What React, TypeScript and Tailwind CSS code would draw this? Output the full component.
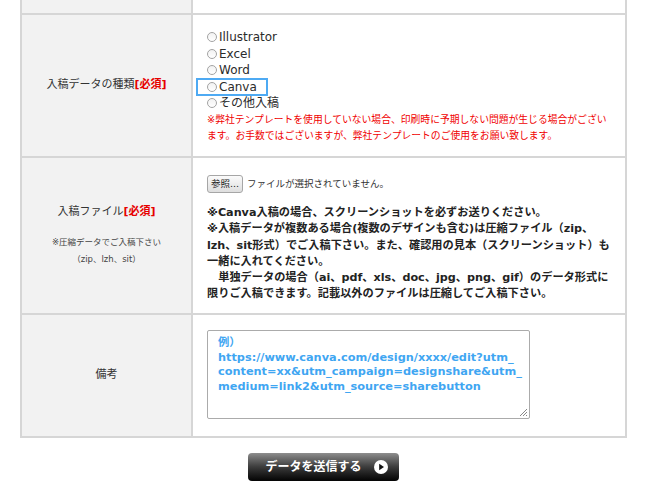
const jp = "font-['DejaVu_Sans','Noto_Sans_CJK_JP',sans-serif]"

function Radio({ label, boxed }: { label: string; boxed?: boolean }) {
  return (
    <div className="relative flex items-center h-[16.5px]">
      {boxed && (
        <span className="absolute left-[-11px] top-[-1px] w-[72px] h-[18px] border-2 border-[#4eaaf3]" />
      )}
      <span className="w-[10px] h-[10px] rounded-full border border-[#a3a3a3] bg-gradient-to-b from-[#f2f2f2] to-white mr-[2px]" />
      <span className="text-[12px] text-[#2b2b2b] leading-none">{label}</span>
    </div>
  )
}

function Required() {
  return <span className="text-[#e60000] font-bold">[必須]</span>
}

export default function App() {
  return (
    <div className={`w-[660px] h-[495px] bg-white overflow-hidden ${jp}`}>
      <div className="ml-[20px] w-[607px] border-x-2 border-[#d6d6d6]">
        {/* 前の行（上端で切れている） */}
        <div className="flex h-[15px] border-b-2 border-[#d6d6d6]">
          <div className="w-[171px] bg-[#f2f2f2] border-r-2 border-[#d6d6d6]" />
          <div className="flex-1" />
        </div>

        {/* 入稿データの種類 */}
        <div className="flex h-[143px] border-b-2 border-[#d6d6d6]">
          <div className="w-[171px] bg-[#f2f2f2] border-r-2 border-[#d6d6d6] flex items-center justify-center text-[11px] text-[#333]">
            入稿データの種類<Required />
          </div>
          <div className="flex-1 pl-[14px] pt-[14px]">
            <Radio label="Illustrator" />
            <Radio label="Excel" />
            <Radio label="Word" />
            <Radio label="Canva" boxed />
            <Radio label="その他入稿" />
            <p className="text-[9.8px] leading-[16.5px] text-[#f00000]">
              ※弊社テンプレートを使用していない場合、印刷時に予期しない問題が生じる場合がござい
              <br />
              ます。お手数ではございますが、弊社テンプレートのご使用をお願い致します。
            </p>
          </div>
        </div>

        {/* 入稿ファイル */}
        <div className="flex h-[157px] border-b-2 border-[#d6d6d6]">
          <div className="w-[171px] bg-[#f2f2f2] border-r-2 border-[#d6d6d6] flex flex-col items-center justify-center text-[#333]">
            <div className="text-[11px] leading-[16px]">
              入稿ファイル<Required />
            </div>
            <div className="mt-[14px] text-[8.5px] leading-[17px] text-center text-[#444]">
              ※圧縮データでご入稿下さい
              <br />
              （zip、lzh、sit）
            </div>
          </div>
          <div className="flex-1 pl-[14px] pt-[17px]">
            <div className="flex items-center gap-[4px]">
              <span className="h-[18px] px-[3px] flex items-center rounded-[3px] border border-[#a6a6a6] bg-gradient-to-b from-[#fbfbfb] to-[#dedede] text-[9.5px] text-[#222]">
                参照...
              </span>
              <span className="text-[9.5px] text-[#333]">ファイルが選択されていません。</span>
            </div>
            <p className="mt-[12px] text-[11.2px] leading-[16.3px] font-bold text-[#222]">
              ※Canva入稿の場合、スクリーンショットを必ずお送りください。
              <br />
              ※入稿データが複数ある場合(複数のデザインも含む)は圧縮ファイル（zip、
              <br />
              lzh、sit形式）でご入稿下さい。また、確認用の見本（スクリーンショット）も
              <br />
              一緒に入れてください。
              <br />
              {"\u3000単独データの場合（ai、pdf、xls、doc、jpg、png、gif）のデータ形式に"}
              <br />
              限りご入稿できます。記載以外のファイルは圧縮してご入稿下さい。
            </p>
          </div>
        </div>

        {/* 備考 */}
        <div className="flex h-[123px] border-b-2 border-[#d6d6d6]">
          <div className="w-[171px] bg-[#f2f2f2] border-r-2 border-[#d6d6d6] flex items-center justify-center text-[11px] text-[#333]">
            備考
          </div>
          <div className="flex-1 pl-[14px] pt-[15px]">
            <div className="relative w-[323px] h-[89px] rounded-[2px] border border-[#ababab] bg-white px-[10px] pt-[5px] text-[11.3px] leading-[14.5px] font-bold text-[#3fa6f2] whitespace-pre overflow-hidden">
              {"例）\nhttps://www.canva.com/design/xxxx/edit?utm_\ncontent=xx&utm_campaign=designshare&utm_\nmedium=link2&utm_source=sharebutton"}
              <svg className="absolute right-[1px] bottom-[1px]" width="10" height="10" viewBox="0 0 10 10">
                <path d="M9 2L2 9M9 5L5 9M9 8L8 9" stroke="#888" strokeWidth="1" />
              </svg>
            </div>
          </div>
        </div>
      </div>

      {/* 送信ボタン */}
      <div className="ml-[20px] w-[607px] flex justify-center mt-[15px]">
        <button className="w-[151px] h-[28px] rounded-[4px] bg-gradient-to-b from-[#8e8e8e] via-[#3c3c3c] to-[#050505] flex items-center justify-center gap-[12px] pl-[6px] text-white text-[12px] font-bold">
          <span>データを送信する</span>
          <svg width="14" height="14" viewBox="0 0 14 14">
            <circle cx="7" cy="7" r="7" fill="#fff" />
            <path d="M5.2 3.8L10 7L5.2 10.2Z" fill="#111" />
          </svg>
        </button>
      </div>
    </div>
  )
}
